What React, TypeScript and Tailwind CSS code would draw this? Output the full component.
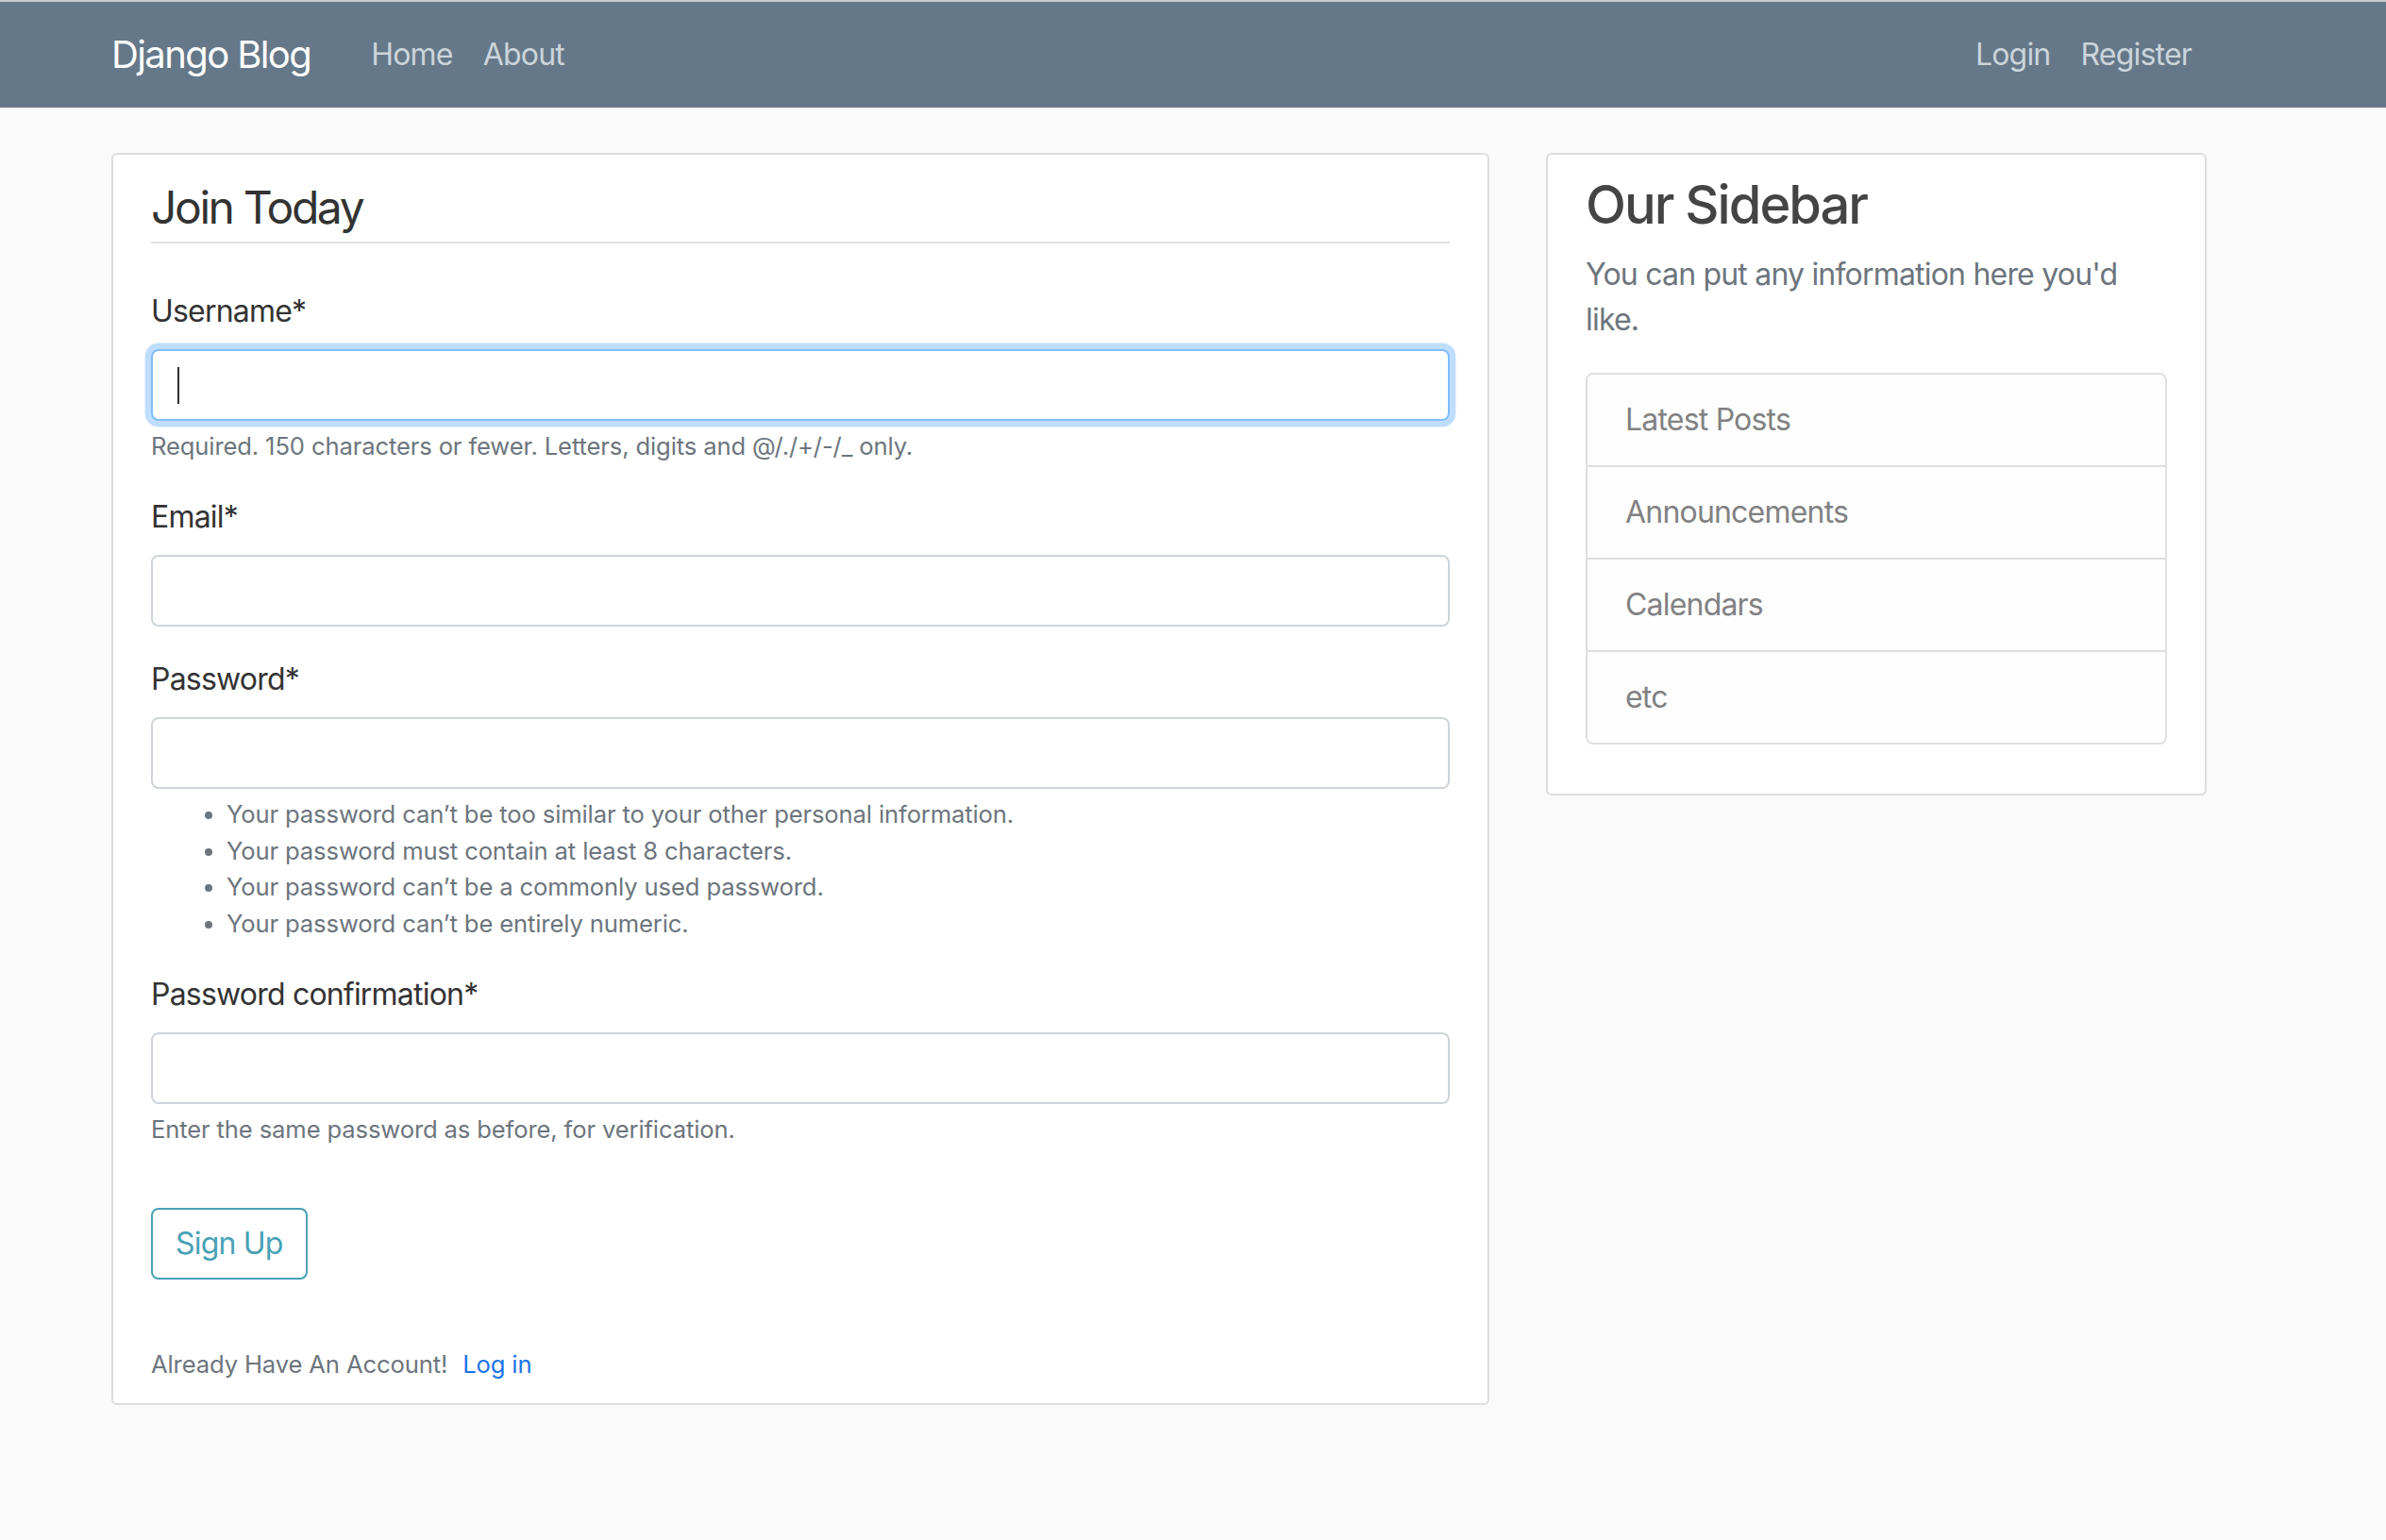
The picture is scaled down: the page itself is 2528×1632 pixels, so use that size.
import React from "react";

const passwordRules = [
  "Your password can\u2019t be too similar to your other personal information.",
  "Your password must contain at least 8 characters.",
  "Your password can\u2019t be a commonly used password.",
  "Your password can\u2019t be entirely numeric.",
];

const sidebarLinks = ["Latest Posts", "Announcements", "Calendars", "etc"];

function Field({
  label,
  type = "text",
  focused = false,
  children,
}: {
  label: string;
  type?: string;
  focused?: boolean;
  children?: React.ReactNode;
}) {
  return (
    <div className="mb-[32px]">
      <label className="mb-[16px] block text-[32px] leading-[48px] tracking-[-0.025em]">
        {label}
        <span>*</span>
      </label>
      <div className="relative">
        <input
          type={type}
          className={
            focused
              ? "block h-[76px] w-full rounded-[8px] border-2 border-[#80bdff] bg-white px-[24px] text-[32px] shadow-[0_0_0_6.4px_rgba(0,123,255,0.25)] outline-none"
              : "block h-[76px] w-full rounded-[8px] border-2 border-[#ced4da] bg-white px-[24px] text-[32px] outline-none"
          }
        />
        {focused && (
          <span className="absolute left-[28px] top-[19px] h-[39px] w-[2px] bg-[#333]" />
        )}
      </div>
      {children}
    </div>
  );
}

export default function App() {
  return (
    <div className="min-h-screen bg-[#fafafa] font-['Inter','Noto_Sans',sans-serif] text-[#333]">
      {/* Navbar */}
      <header className="border-t-2 border-[#c8c9cb] bg-[#657889]">
        <nav className="ml-[88px] flex h-[112px] w-[2280px] items-center px-[30px]">
          <a href="#" className="mr-[48px] text-[40px] leading-[60px] tracking-[-0.04em] text-white">
            Django Blog
          </a>
          <div className="flex">
            <a href="#" className="px-[16px] text-[32px] leading-[48px] tracking-[-0.025em] text-[#cbd5db]">
              Home
            </a>
            <a href="#" className="px-[16px] text-[32px] leading-[48px] tracking-[-0.025em] text-[#cbd5db]">
              About
            </a>
          </div>
          <div className="ml-auto flex">
            <a href="#" className="px-[16px] text-[32px] leading-[48px] tracking-[-0.025em] text-[#cbd5db]">
              Login
            </a>
            <a href="#" className="px-[16px] text-[32px] leading-[48px] tracking-[-0.025em] text-[#cbd5db]">
              Register
            </a>
          </div>
        </nav>
      </header>

      <main className="ml-[118px] flex items-start gap-[60px] pt-[48px]">
        {/* Register form */}
        <section className="w-[1460px] rounded-[6px] border-2 border-[#dddddd] bg-white px-[40px] pb-[14px] pt-[20px]">
          <form onSubmit={(e) => e.preventDefault()}>
            <fieldset className="mb-[32px]">
              <legend className="mb-[48px] w-full border-b-2 border-[#dee2e6] text-[48px] leading-[72px] tracking-[-0.05em]">
                Join Today
              </legend>

              <Field label="Username" focused>
                <small className="mt-[8px] block text-[25.6px] leading-[38.4px] tracking-[-0.005em] text-[#6c757d]">
                  Required. 150 characters or fewer. Letters, digits and @/./+/-/_ only.
                </small>
              </Field>

              <Field label="Email" type="email" />

              <Field label="Password" type="password">
                <ul className="mt-[8px] list-disc pl-[80px] text-[25.6px] leading-[38.4px] tracking-[-0.005em] text-[#6c757d]">
                  {passwordRules.map((rule) => (
                    <li key={rule}>{rule}</li>
                  ))}
                </ul>
              </Field>

              <Field label="Password confirmation" type="password">
                <small className="mt-[8px] block text-[25.6px] leading-[38.4px] tracking-[-0.005em] text-[#6c757d]">
                  Enter the same password as before, for verification.
                </small>
              </Field>
            </fieldset>

            <button
              type="submit"
              className="h-[76px] rounded-[8px] border-2 border-[#48a1b5] bg-white px-[24px] text-[32px] leading-[48px] tracking-[-0.025em] text-[#48a1b5]"
            >
              Sign Up
            </button>
          </form>

          <div className="mt-[66px] leading-[48px]">
            <small className="text-[25.6px] tracking-[-0.005em] text-[#6c757d]">
              Already Have An Account!
              <a href="#" className="ml-[16px] text-[#1a73e8]">
                Log in
              </a>
            </small>
          </div>
        </section>

        {/* Sidebar */}
        <aside className="w-[700px] rounded-[6px] border-2 border-[#dddddd] bg-white px-[40px] pb-[20px] pt-[20px]">
          <h3 className="mb-[16px] text-[56px] font-medium leading-[67.2px] tracking-[-0.035em] text-[#444444]">
            Our Sidebar
          </h3>
          <p className="mb-[32px] text-[32px] leading-[48px] tracking-[-0.025em] text-[#6c757d]">
            You can put any information here you'd like.
          </p>
          <ul className="mb-[32px] overflow-hidden rounded-[8px] border-2 border-[#dfdfdf]">
            {sidebarLinks.map((item, i) => (
              <li
                key={item}
                className={
                  i === 0
                    ? "bg-[#fdfdfe] px-[40px] py-[24px] text-[32px] leading-[48px] tracking-[-0.025em] text-[#818182]"
                    : "border-t-2 border-[#dfdfdf] bg-[#fdfdfe] px-[40px] py-[24px] text-[32px] leading-[48px] tracking-[-0.025em] text-[#818182]"
                }
              >
                {item}
              </li>
            ))}
          </ul>
        </aside>
      </main>
    </div>
  );
}
